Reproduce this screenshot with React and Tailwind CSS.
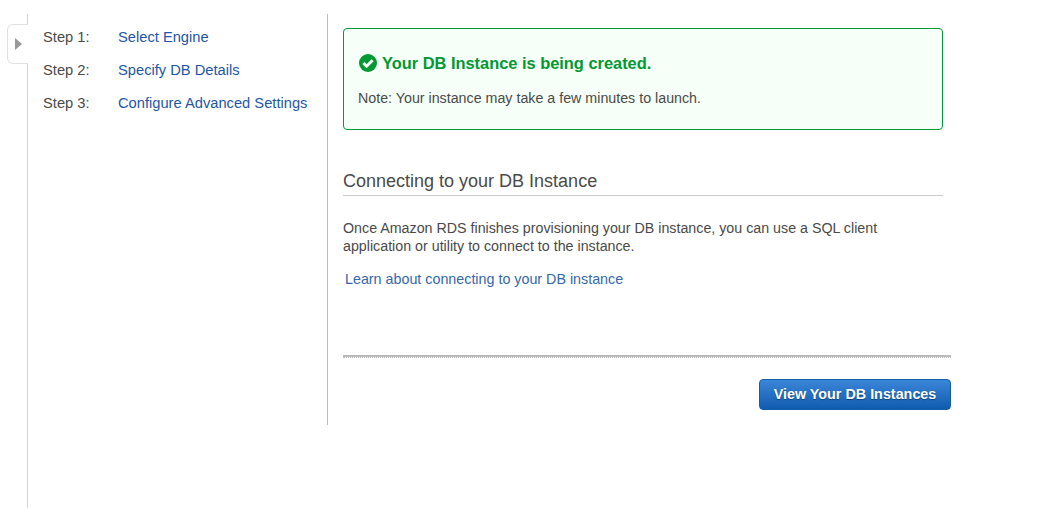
import React from 'react';

const steps = [
  { label: 'Step 1:', name: 'Select Engine' },
  { label: 'Step 2:', name: 'Specify DB Details' },
  { label: 'Step 3:', name: 'Configure Advanced Settings' },
];

const CheckCircle = () => (
  <svg viewBox="0 0 18 18" className="w-[18px] h-[18px] shrink-0">
    <circle cx="9" cy="9" r="9" fill="#009933" />
    <path d="M4.4 9 L7.6 12.2 L13.6 6.2" fill="none" stroke="#f7fff9" strokeWidth="3" />
  </svg>
);

export default function App() {
  return (
    <div className="relative bg-white h-[509px] overflow-hidden pl-[27px] pt-[14px] font-['Liberation_Sans',Arial,sans-serif] text-[#4a4a4a]">
      {/* collapsed nav tab */}
      <div className="absolute left-[7px] top-[24px] w-[21px] h-[40px] bg-white border border-r-0 border-[#e1e1e1] rounded-l-[6px] flex items-center justify-center">
        <div className="w-0 h-0 border-y-[6px] border-y-transparent border-l-[7px] border-l-[#999] ml-[1px]" />
      </div>

      <div className="h-[494px] border-l border-[#d5d5d5]">
        <div className="flex h-[411px]">
          {/* wizard steps */}
          <div className="w-[300px] shrink-0 border-r border-[#bbb] pt-[13px] pl-[15px] text-[14.7px] leading-[20px]">
            {steps.map((s) => (
              <div key={s.label} className="flex h-[33px]">
                <span className="w-[75px] shrink-0">{s.label}</span>
                <span className="text-[#1e56a8] whitespace-nowrap">{s.name}</span>
              </div>
            ))}
          </div>

          {/* main content */}
          <div className="pl-[15px] w-[624px] pt-[14px]">
            <div className="w-[600px] h-[102px] border border-[#009933] rounded-[4px] bg-[#f6fff8] pl-[14px] pt-[24px]">
              <div className="flex items-center gap-[5px] h-[20px] text-[#009933] font-bold text-[16.4px] pl-[1px]">
                <CheckCircle />
                <span>Your DB Instance is being created.</span>
              </div>
              <p className="mt-[15px] text-[14.25px] leading-[20px]">
                Note: Your instance may take a few minutes to launch.
              </p>
            </div>

            <h2 className="w-[600px] mt-[40px] h-[26px] border-b border-[#ccc] text-[18px] leading-[22px]">
              Connecting to your DB Instance
            </h2>
            <p className="w-[560px] mt-[23px] text-[14.25px] leading-[18px]">
              Once Amazon RDS finishes provisioning your DB instance, you can use a SQL client application or utility to connect to the instance.
            </p>
            <a className="block mt-[15px] ml-[2px] text-[14.3px] leading-[18px] text-[#3568ac]">
              Learn about connecting to your DB instance
            </a>

            <div className="w-[608px] mt-[67px] border-t-2 border-b border-t-[#bbb] border-b-[#bbb] [border-bottom-style:dotted]" />
            <div className="w-[608px] mt-[21px] flex justify-end">
              <button className="w-[192px] h-[31px] rounded-[4px] border border-[#125ea8] bg-gradient-to-b from-[#3a86d8] to-[#0f5cb0] text-white font-bold text-[14.35px] [text-shadow:0_1px_1px_#0b3f78]">
                View Your DB Instances
              </button>
            </div>
          </div>
        </div>
      </div>
    </div>
  );
}
